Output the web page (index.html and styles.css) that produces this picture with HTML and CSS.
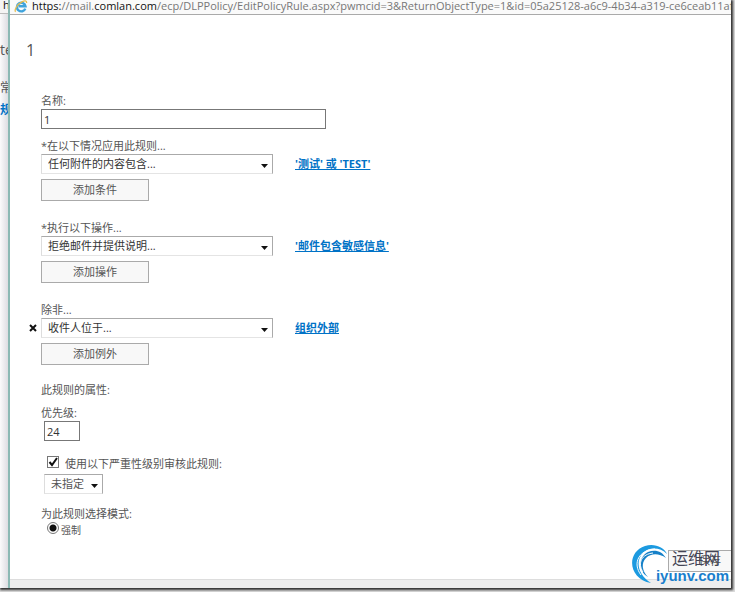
FILE: index.html
```
<!DOCTYPE html>
<html lang="zh-CN">
<head>
  <meta charset="UTF-8">
  <title>1</title>
  <link rel="stylesheet" href="styles.css">
</head>
<body>

<div class="screen">

  <!-- PARENT WINDOW -->
  <div class="behind">
    <span class="behind-url">h</span>
    <span class="behind-title">te</span>
    <span class="behind-tab">常</span>
    <a class="behind-link" href="#">规</a>
  </div>

  <!-- RULE WINDOW -->
  <div class="window">
    <div class="address">
      <svg class="ie" viewBox="0 0 14 14">
        <path d="M11.6 9.2A4.6 4.6 0 1 1 11.8 6.8H4.5" fill="none" stroke="#3fa3dc" stroke-width="2.6"/>
        <path d="M1.2 12.6C-.6 10.6 3.2 4.6 8 2c3-1.6 5.4-1.5 5 1.2" fill="none" stroke="#e6bd4e" stroke-width="1.4"/>
      </svg>
      <span class="url"><b>https:</b>//mail.<b>comlan.com</b>/ecp/DLPPolicy/EditPolicyRule.aspx?pwmcid=3&amp;ReturnObjectType=1&amp;id=05a25128-a6c9-4b34-a319-ce6ceab11af9</span>
    </div>

    <form class="rule">
      <h1>1</h1>

      <div class="field">
        <label for="name">名称:</label>
        <input type="text" id="name" class="name" value="1">
      </div>

      <div class="group">
        <label for="condition">*在以下情况应用此规则...</label>
        <div class="row">
          <select id="condition" class="wide"><option>任何附件的内容包含...</option></select>
          <a href="#">'测试' 或 'TEST'</a>
        </div>
        <button type="button">添加条件</button>
      </div>

      <div class="group">
        <label for="action">*执行以下操作...</label>
        <div class="row">
          <select id="action" class="wide"><option>拒绝邮件并提供说明...</option></select>
          <a href="#">'邮件包含敏感信息'</a>
        </div>
        <button type="button">添加操作</button>
      </div>

      <div class="group">
        <label for="except">除非...</label>
        <div class="row removable">
          <button type="button" class="remove" aria-label="删除">
            <svg viewBox="0 0 8 8"><path d="M1 1l6 6M7 1L1 7" stroke="#111" stroke-width="2"/></svg>
          </button>
          <select id="except" class="wide"><option>收件人位于...</option></select>
          <a href="#">组织外部</a>
        </div>
        <button type="button">添加例外</button>
      </div>

      <p class="heading">此规则的属性:</p>

      <div class="property">
        <label for="priority">优先级:</label>
        <input type="text" id="priority" class="priority" value="24">
      </div>

      <div class="audit">
        <div class="check">
          <input type="checkbox" id="audit" checked>
          <label for="audit">使用以下严重性级别审核此规则:</label>
        </div>
        <select class="level" aria-label="严重性级别"><option>未指定</option></select>
      </div>

      <p class="mode">为此规则选择模式:</p>
      <div class="check">
        <input type="radio" id="enforce" name="mode" checked>
        <label for="enforce" class="option">强制</label>
      </div>
    </form>

    <div class="actions">
      <button type="button" class="save">保存</button>
    </div>
    <div class="status"></div>
  </div>

  <!-- WATERMARK -->
  <div class="watermark">
    <svg viewBox="0 0 40 40">
      <path d="M19 39C-4 35-6 8 13 2c9-3 19 1 22 8C28 3 17 3 11 9 3 17 6 31 19 39z" fill="#1c9ae0"/>
      <path d="M16 33C6 27 6 13 16 8c7-3 14-1 18 6C27 9 19 9 14 14c-5 5-4 13 2 19z" fill="#1580c8"/>
      <path d="M9 31C0 19 7 6 23 5" fill="none" stroke="#fff" stroke-width="1"/>
      <path d="M11 28C5 19 10 10 21 9" fill="none" stroke="#fff" stroke-width="1"/>
    </svg>
    <span class="mark-cn">运维网</span>
    <span class="mark-en">iyunv.com</span>
  </div>

</div>

</body>
</html>
```
FILE: styles.css
```
* {
    box-sizing: border-box;
}

body {
    margin: 0;
    height: 100vh;
    padding: 0 4px 4px 0;
    overflow: hidden;
    background: #ddd;
    color: #555;
    font: 11px/16px "Open Sans", "Noto Sans CJK SC", sans-serif;
}

h1, p {
    margin: 0;
}

.screen {
    position: relative;
    display: flex;
    height: 100%;
    background: #fff;
    box-shadow: 1px 1px 2px 1px #333;
}

/* parent window */
.behind {
    display: flex;
    flex-direction: column;
    width: 8px;
    overflow: hidden;
    background: linear-gradient(to right, #fbfbfc, #dddde2);
    white-space: nowrap;
}

.behind-url {
    height: 14px;
    padding-left: 3px;
    border-bottom: 1px solid #bbb;
    background: #f4f4f4;
    color: #111;
    line-height: 10px;
}

.behind-title {
    margin-top: 28px;
    font-size: 14px;
}

.behind-tab {
    margin-top: 22px;
    font-size: 12px;
}

.behind-link {
    margin-top: 6px;
    color: #0072c6;
    font-size: 12px;
    font-weight: bold;
    text-decoration: none;
}

/* rule window */
.window {
    display: flex;
    flex: 1;
    flex-direction: column;
    min-width: 0;
    border-left: 2px solid #8bb9b4;
}

.address {
    display: flex;
    flex: none;
    gap: 4px;
    height: 15px;
    padding-left: 4px;
    overflow: hidden;
    border-bottom: 1px solid #aaa;
    background: #fafafa;
}

.ie {
    flex: none;
    width: 14px;
    height: 13px;
}

.url {
    color: #777;
    line-height: 11px;
    white-space: nowrap;
}

.url b {
    color: #111;
    font-weight: normal;
}

.rule {
    flex: 1;
    min-height: 0;
    padding: 25px 16px 0 31px;
    overflow: hidden;
}

h1 {
    margin: 0 0 33px -15px;
    font-size: 16px;
    font-weight: normal;
    line-height: 20px;
}

label {
    display: block;
}

input, select {
    display: block;
    height: 20px;
    margin: 0;
    padding: 0 2px;
    border: 1px solid #777;
    border-radius: 0;
    appearance: none;
    background: #fff;
    color: #333;
    font: inherit;
}

.name {
    width: 100%;
    max-width: 285px;
}

select {
    padding: 0 16px 0 6px;
    border-color: #aaa #aaa #e4e4e4 #ddd;
    background: #fff url("data:image/svg+xml,%3Csvg xmlns='http://www.w3.org/2000/svg' width='7' height='4'%3E%3Cpath d='M0 0h7L3.5 4z' fill='%23111'/%3E%3C/svg%3E") no-repeat right 4px top 9px;
}

.wide {
    width: 232px;
}

.field {
    margin-bottom: 9px;
}

.group {
    margin-bottom: 19px;
}

.row {
    display: flex;
    align-items: center;
    margin-bottom: 5px;
}

.row a {
    margin-left: 22px;
    color: #0072c6;
    font-weight: bold;
}

.removable {
    margin-left: -12px;
}

button {
    display: block;
    width: 108px;
    height: 22px;
    padding: 0;
    border: 1px solid #aaa;
    background: #f8f8f8;
    color: #555;
    font: inherit;
}

.remove {
    width: 12px;
    height: 16px;
    border: 0;
    background: none;
}

.remove svg {
    display: block;
    width: 8px;
    height: 8px;
}

.heading {
    margin: -2px 0 7px;
}

.priority {
    width: 36px;
    margin-left: 3px;
}

.property {
    margin-bottom: 15px;
}

.check {
    display: flex;
    gap: 6px;
    padding-left: 6px;
}

.check input {
    flex: none;
    width: 12px;
    height: 12px;
    padding: 0;
}

.check input[type=checkbox] {
    background: #fff url("data:image/svg+xml,%3Csvg xmlns='http://www.w3.org/2000/svg' width='10' height='10'%3E%3Cpath d='M1.5 5l2.5 3 5-7' fill='none' stroke='%23111' stroke-width='2'/%3E%3C/svg%3E") no-repeat;
}

.check input[type=radio] {
    border-radius: 50%;
    background: radial-gradient(#111 0 3px, #fff 4px);
}

.level {
    width: 59px;
    margin: 2px 0 0 3px;
    color: #555;
}

.audit {
    margin-bottom: 12px;
}

.option {
    margin-left: -4px;
    font-size: 10px;
}

.actions {
    display: flex;
    flex: none;
    justify-content: flex-end;
    height: 44px;
    padding-top: 15px;
}

.save {
    width: 63px;
    padding-left: 20px;
    border-right: 0;
}

.status {
    flex: none;
    height: 9px;
    border-top: 1px solid #ddd;
    background: #eee;
}

/* watermark */
.watermark {
    position: absolute;
    right: 2px;
    bottom: 4px;
    display: grid;
    padding-left: 24px;
}

.watermark svg {
    position: absolute;
    left: 0;
    bottom: 0;
    width: 40px;
    height: 40px;
}

.mark-cn {
    padding-left: 16px;
    color: #445;
    font-size: 16px;
    line-height: 20px;
}

.mark-en {
    position: relative;
    color: #1a7fcd;
    font: bold 15px/16px "Liberation Sans", sans-serif;
}
```
